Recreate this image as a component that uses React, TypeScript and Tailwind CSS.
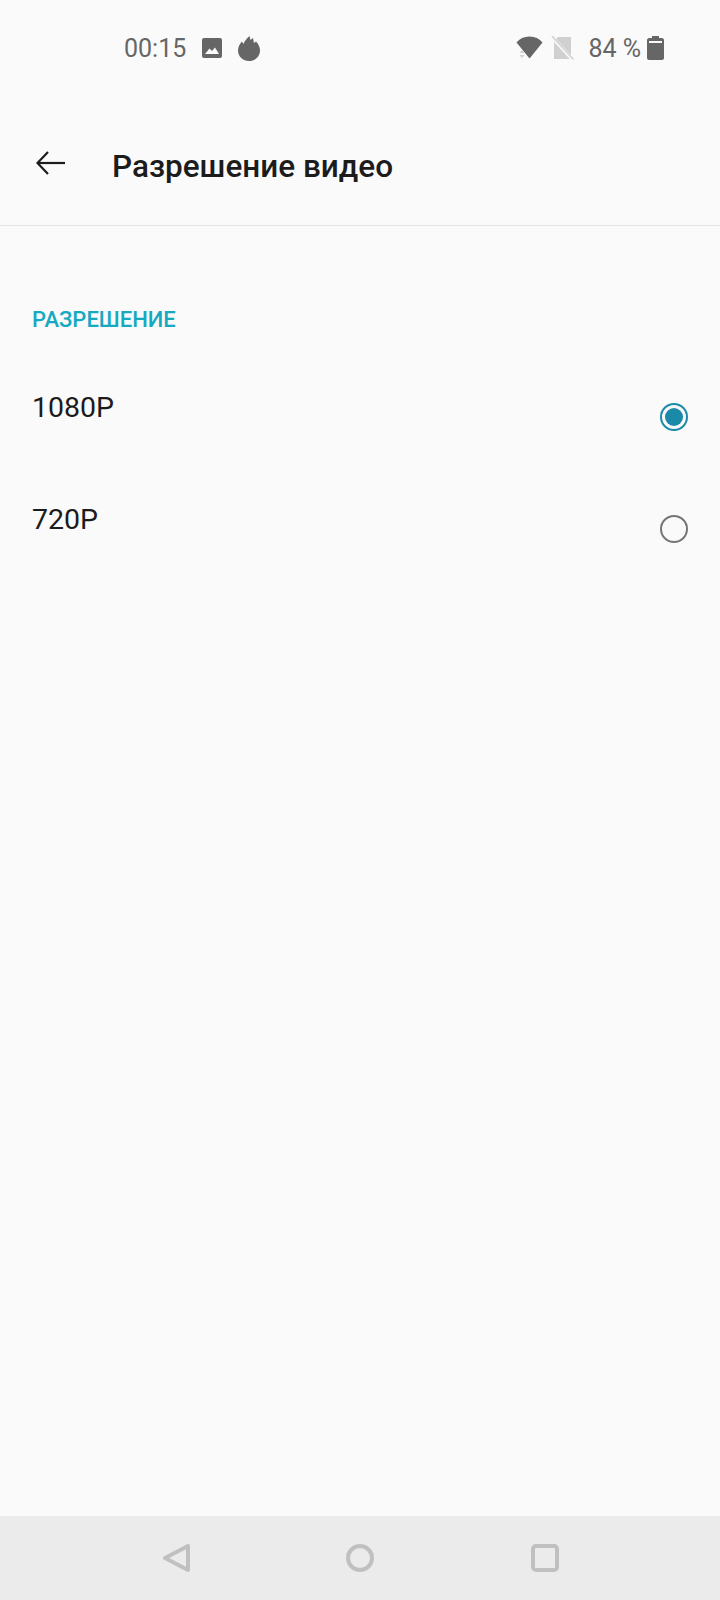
function StatusBar() {
  return (
    <div className="h-[96px] flex items-center pl-[124px] pr-[56px] text-[25px] leading-[28px] text-[#666666]">
      <span className="pt-[1px]">00:15</span>
      {/* gallery icon */}
      <svg className="ml-[16px]" width="20" height="20" viewBox="0 0 20 20">
        <rect width="20" height="20" rx="2" fill="#666666" />
        <path d="M3 16 L7.5 10.5 L10 13 L13 9.5 L17 16 Z" fill="#fafafa" />
      </svg>
      {/* flame icon */}
      <svg className="ml-[16px]" width="22" height="25" viewBox="0 0 22 25">
        <path
          d="M11 25 C5 25 0 20.5 0 14.5 C0 10.5 2 7.5 4 5.5 L5.5 8 C6.5 5 9 2 11.5 0 L12.5 4 L15 2 L16 7 L18 5.5 C20.5 8 22 11 22 14.5 C22 20.5 17 25 11 25 Z"
          fill="#666666"
        />
      </svg>
      <div className="flex-1" />
      {/* wifi with arrows */}
      <svg width="27" height="24" viewBox="0 0 27 24">
        <path d="M0.5 6.5 C3.5 2.5 8 0.5 13.5 0.5 C19 0.5 23.5 2.5 26.5 6.5 L13.5 22.5 Z" fill="#666666" />
        <path d="M3.5 17 L6 14 L8.5 17 Z M3.5 19 L8.5 19 L6 22 Z" fill="#d0d0d0" />
      </svg>
      {/* no sim */}
      <svg className="ml-[8px]" width="23" height="24" viewBox="0 0 23 24">
        <path d="M7 1 H20 V23 H3 V5 Z" fill="#d0d0d0" />
        <path d="M1 1 L22 24" stroke="#fafafa" strokeWidth="3.5" />
        <path d="M1 0 L22.5 23.5" stroke="#d0d0d0" strokeWidth="1.5" />
      </svg>
      <span className="ml-[14px] pt-[1px]">84 %</span>
      {/* battery */}
      <svg className="ml-[6px]" width="17" height="24" viewBox="0 0 17 24">
        <path
          d="M5 0 H12 V2 H15 C16 2 17 3 17 4 V22 C17 23 16 24 15 24 H2 C1 24 0 23 0 22 V4 C0 3 1 2 2 2 H5 Z"
          fill="#666666"
        />
        <rect x="2" y="5" width="13" height="2" fill="#fafafa" />
      </svg>
    </div>
  );
}

function Radio({ checked }: { checked: boolean }) {
  if (checked) {
    return (
      <div className="w-[28px] h-[28px] rounded-full border-[2.5px] border-[#1a8aa8] flex items-center justify-center">
        <div className="w-[18px] h-[18px] rounded-full bg-[#1a8aa8]" />
      </div>
    );
  }
  return <div className="w-[28px] h-[28px] rounded-full border-[2px] border-[#757575]" />;
}

function OptionRow({ label, checked }: { label: string; checked: boolean }) {
  return (
    <div className="h-[112px] flex justify-between px-[32px]">
      <span className="pt-[1px] text-[28.5px] leading-[32px] text-[#1c1c1c]">{label}</span>
      <div className="pt-[12px]">
        <Radio checked={checked} />
      </div>
    </div>
  );
}

export default function App() {
  return (
    <div className="w-[720px] h-[1600px] bg-[#fafafa] flex flex-col font-['Roboto',sans-serif]">
      <StatusBar />

      {/* Toolbar */}
      <div className="h-[130px] border-b border-[#e4e4e4] flex items-start pl-[36px] pt-[51px]">
        <svg width="30" height="26" viewBox="0 0 30 26" className="mt-[3px]" fill="none" stroke="#1c1c1c" strokeWidth="2.2">
          <path d="M1.5 13 H29" />
          <path d="M12 2 L1.5 13 L12 24" />
        </svg>
        <h1 className="ml-[46px] text-[31.5px] leading-[40px] font-medium text-[#1c1c1c]">
          Разрешение видео
        </h1>
      </div>

      {/* Settings list */}
      <div className="flex-1">
        <div className="pl-[32px] pt-[80px] h-[165px] text-[22px] leading-[28px] font-medium text-[#16a9c1]">
          РАЗРЕШЕНИЕ
        </div>
        <OptionRow label="1080P" checked />
        <OptionRow label="720P" checked={false} />
      </div>

      {/* Nav bar */}
      <div className="h-[84px] bg-[#ebebeb] flex items-center justify-center gap-[157px] pb-[1px]">
        <svg width="28" height="28" viewBox="0 0 28 28" className="translate-x-[2px]">
          <path d="M25 2 V26 L2 14 Z" fill="none" stroke="#c0c0c0" strokeWidth="4" strokeLinejoin="round" />
        </svg>
        <div className="w-[28px] h-[28px] rounded-full border-[4px] border-[#c0c0c0]" />
        <div className="w-[28px] h-[28px] rounded-[5px] border-[4px] border-[#c0c0c0]" />
      </div>
    </div>
  );
}
